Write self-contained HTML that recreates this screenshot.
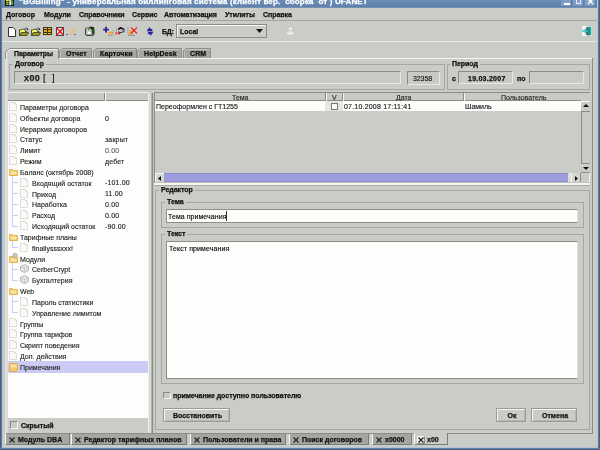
<!DOCTYPE html><html><head><meta charset="utf-8"><style>
html,body{margin:0;padding:0;width:600px;height:450px;overflow:hidden;background:#caccc8;font-family:"Liberation Sans", sans-serif;}
div,span{position:absolute;box-sizing:border-box;}
.t{white-space:nowrap;line-height:1;will-change:transform;-webkit-text-stroke:0.12px currentColor;}
span[style*="font-weight:bold"]{-webkit-text-stroke:0.25px currentColor;}
</style></head><body>
<div style="left:0px;top:0px;width:600px;height:8px;background:linear-gradient(#6a8eb8,#5b7faa)"></div>
<div style="left:0px;top:7px;width:600px;height:1px;background:#7890b0"></div>
<div style="left:0px;top:0px;width:1px;height:450px;background:#4c5c7a"></div>
<div style="left:1px;top:0px;width:1px;height:450px;background:#5a80a8"></div>
<div style="left:2px;top:8px;width:1px;height:440px;background:#b8c4d0"></div>
<div style="left:5px;top:58px;width:3px;height:376px;background:#dcdedc"></div>
<div style="left:598px;top:0px;width:1px;height:450px;background:#5a80a8"></div>
<div style="left:599px;top:0px;width:1px;height:450px;background:#4c5c7a"></div>
<div style="left:597px;top:0px;width:1px;height:450px;background:#b8c4d4"></div>
<div style="left:0px;top:448px;width:600px;height:1px;background:#5a80a8"></div>
<div style="left:0px;top:449px;width:600px;height:1px;background:#4c5c7a"></div>
<div style="left:2px;top:447px;width:596px;height:1px;background:#b8c4d0"></div>
<svg style="position:absolute;left:5px;top:0px" width="9" height="6" viewBox="0 0 9 6"><rect x="0" y="0" width="9" height="6" fill="#1a1a10"/><ellipse cx="2.4" cy="0.4" rx="1.5" ry="0.9" fill="#f0f020"/><ellipse cx="2.4" cy="2.5" rx="1.5" ry="0.7" fill="#b8b820"/><ellipse cx="2.4" cy="4.2" rx="1.5" ry="0.7" fill="#c8c820"/><rect x="4.2" y="0" width="1.8" height="5.2" fill="#e8e8e8"/><rect x="4.2" y="1.5" width="1.8" height="0.6" fill="#a0a0a0"/><rect x="6.2" y="0" width="1.6" height="5.2" fill="#18a018"/><rect x="6.2" y="1.6" width="1.6" height="0.8" fill="#b0e0b0"/><rect x="6.2" y="3.4" width="1.6" height="0.8" fill="#b0e0b0"/></svg>
<span class="t" style="left:19px;top:-2.5px;font-size:8px;font-weight:bold;color:#fff;letter-spacing:0.16px;">"BGBilling" - универсальная биллинговая система (клиент вер.&nbsp; сборка&nbsp; от ) UFANET</span>
<div style="left:561px;top:0px;width:11px;height:7px;background:#7f9ec6;border-right:1px solid #5a7eab;border-bottom:1px solid #5a7eab"></div>
<div style="left:573px;top:0px;width:11px;height:7px;background:#7f9ec6;border-right:1px solid #5a7eab;border-bottom:1px solid #5a7eab"></div>
<div style="left:585px;top:0px;width:11px;height:7px;background:#7f9ec6;border-right:1px solid #5a7eab;border-bottom:1px solid #5a7eab"></div>
<div style="left:564px;top:3px;width:6px;height:2px;background:#fff"></div>
<div style="left:576px;top:0px;width:5px;height:4px;border:1px solid #eef;border-top:0"></div>
<svg style="position:absolute;left:587px;top:0px" width="7" height="5" viewBox="0 0 7 5"><path d="M1 -1 L6 4 M6 -1 L1 4" stroke="#fff" stroke-width="1.4"/></svg>
<div style="left:2px;top:20px;width:595px;height:1px;background:#a4a49e"></div>
<span class="t" style="left:6px;top:10.7px;font-size:7px;font-weight:bold;color:#111;letter-spacing:-0.05px;">Договор</span>
<span class="t" style="left:44px;top:10.7px;font-size:7px;font-weight:bold;color:#111;letter-spacing:-0.05px;">Модули</span>
<span class="t" style="left:79px;top:10.7px;font-size:7px;font-weight:bold;color:#111;letter-spacing:-0.05px;">Справочники</span>
<span class="t" style="left:132px;top:10.7px;font-size:7px;font-weight:bold;color:#111;letter-spacing:-0.05px;">Сервис</span>
<span class="t" style="left:164px;top:10.7px;font-size:7px;font-weight:bold;color:#111;letter-spacing:-0.05px;">Автоматизация</span>
<span class="t" style="left:225px;top:10.7px;font-size:7px;font-weight:bold;color:#111;letter-spacing:-0.05px;">Утилиты</span>
<span class="t" style="left:263px;top:10.7px;font-size:7px;font-weight:bold;color:#111;letter-spacing:-0.05px;">Справка</span>
<div style="left:2px;top:41px;width:595px;height:1px;background:#e6e8e4"></div>
<svg style="position:absolute;left:8px;top:27px" width="8" height="10" viewBox="0 0 8 10"><path d="M0.5 0.5 H5 L7.5 3 V9.5 H0.5 Z" fill="#fff" stroke="#333"/></svg>
<svg style="position:absolute;left:19px;top:27px" width="10" height="9" viewBox="0 0 10 9"><path d="M0.5 8.5 V2.8 H3 L3.8 2.2 H6.2 V4.5 H8 V6 L2.2 6 Z" fill="#f8f870" stroke="#333" stroke-width="0.8"/><path d="M0.5 8.5 L2.2 5.6 H9.6 L8 8.5 Z" fill="#a0a010" stroke="#333" stroke-width="0.8"/><path d="M5.5 1.8 Q6.8 0.2 8.5 1.5" stroke="#444" fill="none" stroke-width="0.7"/><rect x="7.8" y="1.6" width="1.4" height="1.4" fill="#111"/></svg>
<svg style="position:absolute;left:31px;top:27px" width="10" height="9" viewBox="0 0 10 9"><path d="M0.5 8.5 V2.8 H3 L3.8 2.2 H6.2 V4.5 H8 V6 L2.2 6 Z" fill="#f8f870" stroke="#333" stroke-width="0.8"/><path d="M0.5 8.5 L2.2 5.6 H9.6 L8 8.5 Z" fill="#a0a010" stroke="#333" stroke-width="0.8"/><path d="M5.5 1.8 Q6.8 0.2 8.5 1.5" stroke="#444" fill="none" stroke-width="0.7"/><rect x="7.8" y="1.6" width="1.4" height="1.4" fill="#111"/></svg>
<svg style="position:absolute;left:43px;top:27px" width="9" height="8" viewBox="0 0 9 8"><rect x="0" y="0" width="9" height="8" fill="#3a3020"/><rect x="1" y="1" width="3" height="1" fill="#f8c000"/><rect x="5" y="1" width="3" height="1" fill="#f8c000"/><rect x="1" y="3" width="3" height="2" fill="#e8a800"/><rect x="5" y="3" width="3" height="2" fill="#e8a800"/><rect x="1" y="6" width="3" height="1" fill="#f8c000"/><rect x="5" y="6" width="3" height="1" fill="#f8c000"/></svg>
<svg style="position:absolute;left:56px;top:27px" width="8" height="9" viewBox="0 0 8 9"><rect x="0.5" y="0.5" width="7" height="8" fill="#d8d8d8" stroke="#444"/><rect x="1.5" y="1.5" width="2" height="6" fill="#f4f4f4"/><path d="M0.5 1 L7.5 8 M7.5 0.5 L0.5 8.5" stroke="#f01818" stroke-width="1.2"/><rect x="2.8" y="3.3" width="2.4" height="2.4" fill="#f01818"/></svg>
<svg style="position:absolute;left:66px;top:28px" width="11" height="8" viewBox="0 0 11 8"><path d="M4 7 L5 3 L8 0.5 L10 2 L7 5 Z" fill="#e8c890" stroke="#d8b070" stroke-width="0.6"/><rect x="0" y="6" width="2" height="1" fill="#5070a0"/><rect x="8" y="6" width="2" height="1" fill="#5070a0"/></svg>
<svg style="position:absolute;left:85px;top:26px" width="10" height="10" viewBox="0 0 10 10"><rect x="0.6" y="2" width="8" height="7.4" rx="1.5" fill="#cfcfcf" stroke="#3a3a3a" stroke-width="1.1"/><path d="M4 0.8 H7.5 Q9.4 0.8 9.4 2.7 V8.2 H6.8 V4 Z" fill="#102810"/><path d="M8 2.2 V8" stroke="#2a8a2a" stroke-width="0.9"/><circle cx="2.2" cy="2.2" r="0.9" fill="#a8a820"/><circle cx="3.8" cy="3.6" r="0.7" fill="#404018"/><circle cx="5.4" cy="5" r="0.8" fill="#a0c060"/><rect x="3" y="6" width="2.5" height="1.6" fill="#fff"/></svg>
<svg style="position:absolute;left:103px;top:26px" width="11" height="10" viewBox="0 0 11 10"><path d="M3 0.8 V6.5 M0.2 3.6 H5.8" stroke="#302090" stroke-width="1.8"/><rect x="5.5" y="5.8" width="4" height="2.2" fill="#f4a830"/><path d="M10 4.5 V9 M5 9.5 H10" stroke="#555" stroke-width="0.7" stroke-dasharray="0.8 0.8"/></svg>
<svg style="position:absolute;left:115px;top:26px" width="10" height="10" viewBox="0 0 10 10"><rect x="7.5" y="2" width="2" height="4.5" fill="#4848a8"/><path d="M3 3 Q4 0.5 6.5 1 L8 2.5 L7.5 4 H3 Z" fill="#111"/><ellipse cx="5.8" cy="4.2" rx="1.6" ry="1.3" fill="#e8c090"/><path d="M3.5 5 Q5 7 7 5.5 V7 H3.5 Z" fill="#222"/><circle cx="1.5" cy="7.3" r="1.1" fill="#e82020"/><circle cx="4.2" cy="7.5" r="1.1" fill="#e82020"/><path d="M1.5 2.5 V6" stroke="#555" stroke-width="0.7" stroke-dasharray="0.8 0.8"/></svg>
<svg style="position:absolute;left:127px;top:26px" width="11" height="10" viewBox="0 0 11 10"><path d="M1.5 8.5 L3.5 3.5 L5.5 5 L6 8.5 Z" fill="#f0a828"/><path d="M4 1.5 L10 7.5 M10 1.5 L4 7.5" stroke="#f02828" stroke-width="1.1"/><circle cx="6.8" cy="4.3" r="1" fill="#e02020"/><path d="M1 1 V7" stroke="#555" stroke-width="0.7" stroke-dasharray="0.8 0.8"/><path d="M1 9.3 H8" stroke="#444" stroke-width="0.8" stroke-dasharray="0.8 0.8"/></svg>
<svg style="position:absolute;left:146px;top:26px" width="9" height="11" viewBox="0 0 9 11"><path d="M1 4.6 L3.6 1 L4.2 2.4 L6.8 3.4 L5.8 5 L1.4 5.6 Z" fill="#3020a0"/><path d="M7.2 6.2 L4.6 10 L4 8.6 L1.4 7.6 L2.4 6 L6.8 5.4 Z" fill="#3020a0"/></svg>
<span class="t" style="left:162.3px;top:27.8px;font-size:7px;font-weight:bold;color:#111;letter-spacing:-0.2px;">БД:</span>
<div style="left:176px;top:24px;width:91px;height:14px;border:1px solid #8a8c88;background:#caccc8;box-shadow:inset 1px 1px 0 #f6f6f0"></div>
<span class="t" style="left:179.5px;top:27.5px;font-size:7px;font-weight:bold;color:#111;letter-spacing:0px;">Local</span>
<svg style="position:absolute;left:256px;top:29px" width="7" height="4" viewBox="0 0 7 4"><path d="M0 0 H7 L3.5 4 Z" fill="#111"/></svg>
<svg style="position:absolute;left:286px;top:26px" width="9" height="10" viewBox="0 0 9 10"><circle cx="4.5" cy="3" r="2.5" fill="#e6e6e2" stroke="#b8b8b4" stroke-width="0.6"/><rect x="0.5" y="5" width="8" height="4.5" rx="2" fill="#e6e6e2" stroke="#b8b8b4" stroke-width="0.6"/></svg>
<svg style="position:absolute;left:582px;top:26px" width="10" height="10" viewBox="0 0 10 10"><rect x="0" y="0" width="9.5" height="10" fill="#f2f2f0"/><path d="M4 1.5 L7 0.5 V9.5 L4 9 Z" fill="#5a6464"/><path d="M6 1.2 L9.2 0.3 V9 L6.6 10 Z" fill="#18b4b4"/><path d="M7.2 2 V8.5" stroke="#0c6a6a" stroke-width="0.6"/><rect x="0.3" y="4.2" width="2.8" height="1.6" fill="#30c8c8"/><path d="M2.6 2.2 L6 5 L2.6 7.8 Z" fill="#20d0d0"/></svg>
<svg style="position:absolute;left:5px;top:47px" width="55" height="12" viewBox="0 0 55 12"><path d="M0.5 12 V5 L4.5 1.5 H53.5 V12" fill="#caccc8" stroke="#8c8c88" stroke-width="1"/><path d="M1.5 12 V5.5 L5 2.5 H52.5" fill="none" stroke="#f6f6f0" stroke-width="1"/></svg>
<span class="t" style="left:14px;top:50px;font-size:7px;font-weight:bold;color:#111;letter-spacing:-0.1px;">Параметры</span>
<svg style="position:absolute;left:59px;top:47px" width="34" height="11" viewBox="0 0 34 11"><path d="M0.5 11 V4 L3 1.5 H32.5 V11" fill="#a4a6a2" stroke="#8c8c88" stroke-width="1"/><path d="M1.5 10.5 V4.5 L3.5 2.5 H31.5" fill="none" stroke="#c4c4c0" stroke-width="1"/></svg>
<span class="t" style="left:65.5px;top:50px;font-size:7px;font-weight:bold;color:#111;letter-spacing:0.1px;">Отчет</span>
<svg style="position:absolute;left:93px;top:47px" width="45" height="11" viewBox="0 0 45 11"><path d="M0.5 11 V4 L3 1.5 H43.5 V11" fill="#a4a6a2" stroke="#8c8c88" stroke-width="1"/><path d="M1.5 10.5 V4.5 L3.5 2.5 H42.5" fill="none" stroke="#c4c4c0" stroke-width="1"/></svg>
<span class="t" style="left:99.5px;top:50px;font-size:7px;font-weight:bold;color:#111;letter-spacing:0.1px;">Карточки</span>
<svg style="position:absolute;left:137px;top:47px" width="46" height="11" viewBox="0 0 46 11"><path d="M0.5 11 V4 L3 1.5 H44.5 V11" fill="#a4a6a2" stroke="#8c8c88" stroke-width="1"/><path d="M1.5 10.5 V4.5 L3.5 2.5 H43.5" fill="none" stroke="#c4c4c0" stroke-width="1"/></svg>
<span class="t" style="left:143.5px;top:50px;font-size:7px;font-weight:bold;color:#111;letter-spacing:0.1px;">HelpDesk</span>
<svg style="position:absolute;left:183px;top:47px" width="29" height="11" viewBox="0 0 29 11"><path d="M0.5 11 V4 L3 1.5 H27.5 V11" fill="#a4a6a2" stroke="#8c8c88" stroke-width="1"/><path d="M1.5 10.5 V4.5 L3.5 2.5 H26.5" fill="none" stroke="#c4c4c0" stroke-width="1"/></svg>
<span class="t" style="left:189.5px;top:50px;font-size:7px;font-weight:bold;color:#111;letter-spacing:0.1px;">CRM</span>
<div style="left:6px;top:58px;width:587px;height:376px;border-right:1px solid #8c8c88;border-bottom:1px solid #8c8c88"></div>
<div style="left:59px;top:58px;width:533px;height:1px;background:#f6f6f0"></div>
<div style="left:9px;top:64px;width:436px;height:26px;border:1px solid #a6a6a2"></div>
<span class="t" style="left:13px;top:60px;font-size:7px;font-weight:bold;color:#111;letter-spacing:-0.05px;background:#caccc8;padding:0 2px">Договор</span>
<div style="left:14px;top:71px;width:387px;height:13px;background:#c8cac6;border:1px solid #8c8c88;border-right-color:#e6e8e4;border-bottom-color:#e6e8e4"></div>
<span class="t" style="left:24px;top:73.6px;font-size:9px;font-weight:bold;color:#222;letter-spacing:0.4px;font-family:"Liberation Mono",monospace;-webkit-text-stroke:0">x00</span>
<span class="t" style="left:42.6px;top:73.3px;font-size:9.5px;font-weight:normal;color:#111;letter-spacing:0px;-webkit-text-stroke:0.15px #111">[</span>
<span class="t" style="left:52.1px;top:73.3px;font-size:9.5px;font-weight:normal;color:#111;letter-spacing:0px;-webkit-text-stroke:0.15px #111">]</span>
<div style="left:407px;top:71px;width:33px;height:14px;background:#c8cac6;border:1px solid #8c8c88;border-right-color:#e6e8e4;border-bottom-color:#e6e8e4"></div>
<span class="t" style="left:412.5px;top:74.5px;font-size:7px;font-weight:normal;color:#111;letter-spacing:-0.1px;font-family:"Liberation Mono",monospace;-webkit-text-stroke:0.2px #111">32358</span>
<div style="left:447px;top:64px;width:143px;height:26px;border:1px solid #a6a6a2"></div>
<span class="t" style="left:450px;top:60px;font-size:7px;font-weight:bold;color:#111;letter-spacing:-0.05px;background:#caccc8;padding:0 2px">Период</span>
<span class="t" style="left:452px;top:75px;font-size:7px;font-weight:bold;color:#111;letter-spacing:0px;">с</span>
<div style="left:458px;top:71px;width:55px;height:13px;background:#c8cac6;border:1px solid #8c8c88;border-right-color:#e6e8e4;border-bottom-color:#e6e8e4"></div>
<span class="t" style="left:468px;top:74.5px;font-size:7px;font-weight:bold;color:#111;letter-spacing:0.25px;">19.03.2007</span>
<span class="t" style="left:517px;top:75px;font-size:7px;font-weight:bold;color:#111;letter-spacing:0px;">по</span>
<div style="left:529px;top:71px;width:55px;height:13px;background:#c8cac6;border:1px solid #8c8c88;border-right-color:#e6e8e4;border-bottom-color:#e6e8e4"></div>
<div style="left:148px;top:93px;width:1px;height:340px;background:#f0f0ea"></div>
<div style="left:8px;top:92px;width:140px;height:1px;background:#ececE6"></div>
<div style="left:8px;top:93px;width:140px;height:8px;background:#c8cac6;border-bottom:1px solid #8c8c88"></div>
<div style="left:104px;top:93px;width:1px;height:8px;background:#8c8c88"></div>
<div style="left:105px;top:93px;width:1px;height:8px;background:#f6f6f0"></div>
<div style="left:8px;top:101px;width:140px;height:317px;background:#fdfdfb"></div>
<div style="left:12px;top:176px;width:1px;height:51px;background:#ccccfa"></div>
<div style="left:12px;top:182px;width:6px;height:1px;background:#ccccfa"></div>
<div style="left:12px;top:193px;width:6px;height:1px;background:#ccccfa"></div>
<div style="left:12px;top:204px;width:6px;height:1px;background:#ccccfa"></div>
<div style="left:12px;top:215px;width:6px;height:1px;background:#ccccfa"></div>
<div style="left:12px;top:226px;width:6px;height:1px;background:#ccccfa"></div>
<div style="left:12px;top:241px;width:1px;height:7px;background:#ccccfa"></div>
<div style="left:12px;top:247px;width:6px;height:1px;background:#ccccfa"></div>
<div style="left:12px;top:263px;width:1px;height:18px;background:#ccccfa"></div>
<div style="left:12px;top:269px;width:6px;height:1px;background:#ccccfa"></div>
<div style="left:12px;top:280px;width:6px;height:1px;background:#ccccfa"></div>
<div style="left:12px;top:295px;width:1px;height:18px;background:#ccccfa"></div>
<div style="left:12px;top:301px;width:6px;height:1px;background:#ccccfa"></div>
<div style="left:12px;top:312px;width:6px;height:1px;background:#ccccfa"></div>
<svg style="position:absolute;left:9px;top:102px" width="8" height="9" viewBox="0 0 8 9"><path d="M0.5 0.5 H5 L7.5 3 V8.5 H0.5 Z" fill="#fafaf8" stroke="#dcdcd8"/><path d="M5 0.5 L7.5 3" stroke="#c8c8c4"/></svg>
<span class="t" style="left:20px;top:104.0px;font-size:7px;font-weight:normal;color:#222;letter-spacing:0px;">Параметры договора</span>
<svg style="position:absolute;left:9px;top:113px" width="8" height="9" viewBox="0 0 8 9"><path d="M0.5 0.5 H5 L7.5 3 V8.5 H0.5 Z" fill="#fafaf8" stroke="#dcdcd8"/><path d="M5 0.5 L7.5 3" stroke="#c8c8c4"/></svg>
<span class="t" style="left:20px;top:114.825px;font-size:7px;font-weight:normal;color:#222;letter-spacing:0px;">Объекты договора</span>
<span class="t" style="left:105.3px;top:114.525px;font-size:7px;font-weight:normal;color:#222;letter-spacing:0.15px;">0</span>
<svg style="position:absolute;left:9px;top:124px" width="8" height="9" viewBox="0 0 8 9"><path d="M0.5 0.5 H5 L7.5 3 V8.5 H0.5 Z" fill="#fafaf8" stroke="#dcdcd8"/><path d="M5 0.5 L7.5 3" stroke="#c8c8c4"/></svg>
<span class="t" style="left:20px;top:125.65px;font-size:7px;font-weight:normal;color:#222;letter-spacing:0px;">Иерархия договоров</span>
<svg style="position:absolute;left:9px;top:134px" width="8" height="9" viewBox="0 0 8 9"><path d="M0.5 0.5 H5 L7.5 3 V8.5 H0.5 Z" fill="#fafaf8" stroke="#dcdcd8"/><path d="M5 0.5 L7.5 3" stroke="#c8c8c4"/></svg>
<span class="t" style="left:20px;top:136.475px;font-size:7px;font-weight:normal;color:#222;letter-spacing:0px;">Статус</span>
<span class="t" style="left:105.3px;top:136.17499999999998px;font-size:7px;font-weight:normal;color:#222;letter-spacing:0.15px;">закрыт</span>
<svg style="position:absolute;left:9px;top:145px" width="8" height="9" viewBox="0 0 8 9"><path d="M0.5 0.5 H5 L7.5 3 V8.5 H0.5 Z" fill="#fafaf8" stroke="#dcdcd8"/><path d="M5 0.5 L7.5 3" stroke="#c8c8c4"/></svg>
<span class="t" style="left:20px;top:147.3px;font-size:7px;font-weight:normal;color:#222;letter-spacing:0px;">Лимит</span>
<span class="t" style="left:105.3px;top:147.0px;font-size:7px;font-weight:normal;color:#5c5c5c;letter-spacing:0.15px;">0.00</span>
<svg style="position:absolute;left:9px;top:156px" width="8" height="9" viewBox="0 0 8 9"><path d="M0.5 0.5 H5 L7.5 3 V8.5 H0.5 Z" fill="#fafaf8" stroke="#dcdcd8"/><path d="M5 0.5 L7.5 3" stroke="#c8c8c4"/></svg>
<span class="t" style="left:20px;top:158.125px;font-size:7px;font-weight:normal;color:#222;letter-spacing:0px;">Режим</span>
<span class="t" style="left:105.3px;top:157.825px;font-size:7px;font-weight:normal;color:#222;letter-spacing:0.15px;">дебет</span>
<svg style="position:absolute;left:9px;top:168px" width="9" height="8" viewBox="0 0 9 8"><path d="M0.5 1.5 H3.5 L4.5 2.5 H8.5 V7.5 H0.5 Z" fill="#f2c868" stroke="#e0a840" stroke-width="0.8"/><rect x="1.5" y="3.5" width="6" height="3" fill="#fce4a0"/></svg>
<span class="t" style="left:20px;top:168.95px;font-size:7px;font-weight:normal;color:#222;letter-spacing:0px;">Баланс (октябрь 2008)</span>
<svg style="position:absolute;left:20px;top:178px" width="8" height="9" viewBox="0 0 8 9"><path d="M0.5 0.5 H5 L7.5 3 V8.5 H0.5 Z" fill="#fafaf8" stroke="#dcdcd8"/><path d="M5 0.5 L7.5 3" stroke="#c8c8c4"/></svg>
<span class="t" style="left:32px;top:179.77499999999998px;font-size:7px;font-weight:normal;color:#222;letter-spacing:0px;">Входящий остаток</span>
<span class="t" style="left:105.3px;top:179.47499999999997px;font-size:7px;font-weight:normal;color:#222;letter-spacing:0.15px;">-101.00</span>
<svg style="position:absolute;left:20px;top:189px" width="8" height="9" viewBox="0 0 8 9"><path d="M0.5 0.5 H5 L7.5 3 V8.5 H0.5 Z" fill="#fafaf8" stroke="#dcdcd8"/><path d="M5 0.5 L7.5 3" stroke="#c8c8c4"/></svg>
<span class="t" style="left:32px;top:190.6px;font-size:7px;font-weight:normal;color:#222;letter-spacing:0px;">Приход</span>
<span class="t" style="left:105.3px;top:190.29999999999998px;font-size:7px;font-weight:normal;color:#222;letter-spacing:0.15px;">11.00</span>
<svg style="position:absolute;left:20px;top:199px" width="8" height="9" viewBox="0 0 8 9"><path d="M0.5 0.5 H5 L7.5 3 V8.5 H0.5 Z" fill="#fafaf8" stroke="#dcdcd8"/><path d="M5 0.5 L7.5 3" stroke="#c8c8c4"/></svg>
<span class="t" style="left:32px;top:201.425px;font-size:7px;font-weight:normal;color:#222;letter-spacing:0px;">Наработка</span>
<span class="t" style="left:105.3px;top:201.125px;font-size:7px;font-weight:normal;color:#222;letter-spacing:0.15px;">0.00</span>
<svg style="position:absolute;left:20px;top:210px" width="8" height="9" viewBox="0 0 8 9"><path d="M0.5 0.5 H5 L7.5 3 V8.5 H0.5 Z" fill="#fafaf8" stroke="#dcdcd8"/><path d="M5 0.5 L7.5 3" stroke="#c8c8c4"/></svg>
<span class="t" style="left:32px;top:212.25px;font-size:7px;font-weight:normal;color:#222;letter-spacing:0px;">Расход</span>
<span class="t" style="left:105.3px;top:211.95px;font-size:7px;font-weight:normal;color:#222;letter-spacing:0.15px;">0.00</span>
<svg style="position:absolute;left:20px;top:221px" width="8" height="9" viewBox="0 0 8 9"><path d="M0.5 0.5 H5 L7.5 3 V8.5 H0.5 Z" fill="#fafaf8" stroke="#dcdcd8"/><path d="M5 0.5 L7.5 3" stroke="#c8c8c4"/></svg>
<span class="t" style="left:32px;top:223.075px;font-size:7px;font-weight:normal;color:#222;letter-spacing:0px;">Исходящий остаток</span>
<span class="t" style="left:105.3px;top:222.77499999999998px;font-size:7px;font-weight:normal;color:#222;letter-spacing:0.15px;">-90.00</span>
<svg style="position:absolute;left:9px;top:233px" width="9" height="8" viewBox="0 0 9 8"><path d="M0.5 1.5 H3.5 L4.5 2.5 H8.5 V7.5 H0.5 Z" fill="#f2c868" stroke="#e0a840" stroke-width="0.8"/><rect x="1.5" y="3.5" width="6" height="3" fill="#fce4a0"/></svg>
<span class="t" style="left:20px;top:233.89999999999998px;font-size:7px;font-weight:normal;color:#222;letter-spacing:0px;">Тарифные планы</span>
<svg style="position:absolute;left:20px;top:243px" width="8" height="9" viewBox="0 0 8 9"><path d="M0.5 0.5 H5 L7.5 3 V8.5 H0.5 Z" fill="#fafaf8" stroke="#dcdcd8"/><path d="M5 0.5 L7.5 3" stroke="#c8c8c4"/></svg>
<span class="t" style="left:32px;top:244.725px;font-size:7px;font-weight:normal;color:#222;letter-spacing:0px;">finallysssxxx!</span>
<svg style="position:absolute;left:9px;top:255px" width="9" height="8" viewBox="0 0 9 8"><path d="M0.5 1.5 H3.5 L4.5 2.5 H8.5 V7.5 H0.5 Z" fill="#f2c868" stroke="#e0a840" stroke-width="0.8"/><rect x="1.5" y="3.5" width="6" height="3" fill="#fce4a0"/></svg>
<svg style="position:absolute;left:12px;top:253px" width="6" height="5" viewBox="0 0 6 5"><circle cx="3" cy="2.5" r="2.2" fill="#c8c8c8" stroke="#999" stroke-width="0.6"/></svg>
<span class="t" style="left:20px;top:255.54999999999998px;font-size:7px;font-weight:normal;color:#222;letter-spacing:0px;">Модули</span>
<svg style="position:absolute;left:20px;top:264px" width="9" height="9" viewBox="0 0 9 9"><path d="M4.5 0.5 L8.5 2.5 V6.5 L4.5 8.5 L0.5 6.5 V2.5 Z" fill="#e4e4e4" stroke="#a8a8a8" stroke-width="0.8"/><path d="M0.5 2.5 L4.5 4.5 L8.5 2.5 M4.5 4.5 V8.5" stroke="#b8b8b8" stroke-width="0.6" fill="none"/></svg>
<span class="t" style="left:32px;top:266.375px;font-size:7px;font-weight:normal;color:#222;letter-spacing:0px;">CerberCrypt</span>
<svg style="position:absolute;left:20px;top:275px" width="9" height="9" viewBox="0 0 9 9"><path d="M4.5 0.5 L8.5 2.5 V6.5 L4.5 8.5 L0.5 6.5 V2.5 Z" fill="#e4e4e4" stroke="#a8a8a8" stroke-width="0.8"/><path d="M0.5 2.5 L4.5 4.5 L8.5 2.5 M4.5 4.5 V8.5" stroke="#b8b8b8" stroke-width="0.6" fill="none"/></svg>
<span class="t" style="left:32px;top:277.2px;font-size:7px;font-weight:normal;color:#222;letter-spacing:0px;">Бухгалтерия</span>
<svg style="position:absolute;left:9px;top:287px" width="9" height="8" viewBox="0 0 9 8"><path d="M0.5 1.5 H3.5 L4.5 2.5 H8.5 V7.5 H0.5 Z" fill="#f2c868" stroke="#e0a840" stroke-width="0.8"/><rect x="1.5" y="3.5" width="6" height="3" fill="#fce4a0"/></svg>
<span class="t" style="left:20px;top:288.025px;font-size:7px;font-weight:normal;color:#222;letter-spacing:0px;">Web</span>
<svg style="position:absolute;left:20px;top:297px" width="8" height="9" viewBox="0 0 8 9"><path d="M0.5 0.5 H5 L7.5 3 V8.5 H0.5 Z" fill="#fafaf8" stroke="#dcdcd8"/><path d="M5 0.5 L7.5 3" stroke="#c8c8c4"/></svg>
<span class="t" style="left:32px;top:298.85px;font-size:7px;font-weight:normal;color:#222;letter-spacing:0px;">Пароль статистики</span>
<svg style="position:absolute;left:20px;top:308px" width="8" height="9" viewBox="0 0 8 9"><path d="M0.5 0.5 H5 L7.5 3 V8.5 H0.5 Z" fill="#fafaf8" stroke="#dcdcd8"/><path d="M5 0.5 L7.5 3" stroke="#c8c8c4"/></svg>
<span class="t" style="left:32px;top:309.67499999999995px;font-size:7px;font-weight:normal;color:#222;letter-spacing:0px;">Управление лимитом</span>
<svg style="position:absolute;left:9px;top:318px" width="8" height="9" viewBox="0 0 8 9"><path d="M0.5 0.5 H5 L7.5 3 V8.5 H0.5 Z" fill="#fafaf8" stroke="#dcdcd8"/><path d="M5 0.5 L7.5 3" stroke="#c8c8c4"/></svg>
<span class="t" style="left:20px;top:320.5px;font-size:7px;font-weight:normal;color:#222;letter-spacing:0px;">Группы</span>
<svg style="position:absolute;left:9px;top:329px" width="8" height="9" viewBox="0 0 8 9"><path d="M0.5 0.5 H5 L7.5 3 V8.5 H0.5 Z" fill="#fafaf8" stroke="#dcdcd8"/><path d="M5 0.5 L7.5 3" stroke="#c8c8c4"/></svg>
<span class="t" style="left:20px;top:331.325px;font-size:7px;font-weight:normal;color:#222;letter-spacing:0px;">Группа тарифов</span>
<svg style="position:absolute;left:9px;top:340px" width="8" height="9" viewBox="0 0 8 9"><path d="M0.5 0.5 H5 L7.5 3 V8.5 H0.5 Z" fill="#fafaf8" stroke="#dcdcd8"/><path d="M5 0.5 L7.5 3" stroke="#c8c8c4"/></svg>
<span class="t" style="left:20px;top:342.15px;font-size:7px;font-weight:normal;color:#222;letter-spacing:0px;">Скрипт поведения</span>
<svg style="position:absolute;left:9px;top:351px" width="8" height="9" viewBox="0 0 8 9"><path d="M0.5 0.5 H5 L7.5 3 V8.5 H0.5 Z" fill="#fafaf8" stroke="#dcdcd8"/><path d="M5 0.5 L7.5 3" stroke="#c8c8c4"/></svg>
<span class="t" style="left:20px;top:352.975px;font-size:7px;font-weight:normal;color:#222;letter-spacing:0px;">Доп. действия</span>
<div style="left:8px;top:361px;width:140px;height:11.5px;background:#cbcbf6"></div>
<svg style="position:absolute;left:9px;top:363px" width="9" height="9" viewBox="0 0 9 9"><rect x="0.5" y="0.5" width="8" height="8" rx="1" fill="#f4c870" stroke="#e0a040" stroke-width="0.8"/><rect x="1.5" y="1.5" width="6" height="3" fill="#fce0a0"/></svg>
<span class="t" style="left:20px;top:363.79999999999995px;font-size:7px;font-weight:normal;color:#222;letter-spacing:0px;">Примечания</span>
<div style="left:10px;top:421px;width:8px;height:8px;background:#c8cac6;border:1px solid #8c8c88;border-right-color:#f6f6f0;border-bottom-color:#f6f6f0"></div>
<span class="t" style="left:21px;top:422px;font-size:7px;font-weight:bold;color:#111;letter-spacing:0px;">Скрытый</span>
<div style="left:149px;top:93px;width:2px;height:340px;background:#d8dad6"></div>
<div style="left:151px;top:93px;width:1px;height:340px;background:#b0b2ae"></div>
<div style="left:152px;top:93px;width:1px;height:340px;background:#8c8e8a"></div>
<div style="left:153px;top:93px;width:1px;height:340px;background:#c0c2be"></div>
<div style="left:154px;top:92px;width:436px;height:92px;border:1px solid #8c8c88;border-right-color:#f6f6f0;border-bottom-color:#f6f6f0"></div>
<div style="left:155px;top:93px;width:426px;height:8px;background:#c8cac6;border-bottom:1px solid #8c8c88"></div>
<div style="left:325px;top:93px;width:1px;height:8px;background:#8c8c88"></div>
<div style="left:326px;top:93px;width:1px;height:8px;background:#f6f6f0"></div>
<div style="left:342px;top:93px;width:1px;height:8px;background:#8c8c88"></div>
<div style="left:343px;top:93px;width:1px;height:8px;background:#f6f6f0"></div>
<div style="left:463px;top:93px;width:1px;height:8px;background:#8c8c88"></div>
<div style="left:464px;top:93px;width:1px;height:8px;background:#f6f6f0"></div>
<span class="t" style="left:231.7px;top:94px;font-size:7px;font-weight:normal;color:#222;letter-spacing:0px;">Тема</span>
<span class="t" style="left:332px;top:94px;font-size:7px;font-weight:normal;color:#222;letter-spacing:0px;">V</span>
<span class="t" style="left:396px;top:94px;font-size:7px;font-weight:normal;color:#222;letter-spacing:0px;">Дата</span>
<span class="t" style="left:501px;top:94px;font-size:7px;font-weight:normal;color:#222;letter-spacing:0px;">Пользователь</span>
<div style="left:155px;top:101px;width:426px;height:10px;background:#fdfdfb"></div>
<div style="left:325px;top:101px;width:18px;height:10px;background:#e6e6e2"></div>
<div style="left:331px;top:103px;width:7px;height:7px;background:#fdfdfb;border:1px solid #777"></div>
<span class="t" style="left:155.5px;top:103px;font-size:7px;font-weight:normal;color:#111;letter-spacing:0px;">Переоформлен с ГТ1255</span>
<span class="t" style="left:344px;top:103px;font-size:7px;font-weight:normal;color:#111;letter-spacing:0.2px;">07.10.2008 17:11:41</span>
<span class="t" style="left:465px;top:103px;font-size:7px;font-weight:normal;color:#111;letter-spacing:0px;">Шамиль</span>
<div style="left:581px;top:92px;width:9px;height:1px;background:#8c8c88"></div>
<div style="left:581px;top:93px;width:9px;height:8px;background:#caccc8"></div>
<div style="left:581px;top:101px;width:9px;height:72px;background:#c8cac6"></div>
<div style="left:581px;top:101px;width:9px;height:10px;background:#caccc8;border-top:1px solid #f6f6f0"></div>
<svg style="position:absolute;left:583px;top:104px" width="6" height="3" viewBox="0 0 6 3"><path d="M0 3 H6 L3 0 Z" fill="#111"/></svg>
<div style="left:581px;top:111px;width:9px;height:1px;background:#8c8c88"></div>
<div style="left:581px;top:111px;width:1px;height:52px;background:#8c8c88"></div>
<div style="left:581px;top:163px;width:9px;height:1px;background:#8c8c88"></div>
<div style="left:581px;top:164px;width:9px;height:8px;background:#caccc8"></div>
<svg style="position:absolute;left:583px;top:167px" width="6" height="3" viewBox="0 0 6 3"><path d="M0 0 H6 L3 3 Z" fill="#111"/></svg>
<div style="left:581px;top:172px;width:9px;height:1px;background:#8c8c88"></div>
<div style="left:155px;top:173px;width:426px;height:10px;background:#c8cac6"></div>
<div style="left:155px;top:173px;width:9px;height:9px;background:#d4d6d2;border-left:1px solid #f6f6f0;border-top:1px solid #f6f6f0"></div>
<svg style="position:absolute;left:158px;top:176px" width="3" height="5" viewBox="0 0 3 5"><path d="M3 0 V5 L0 2.5 Z" fill="#111"/></svg>
<div style="left:164px;top:173px;width:404px;height:9px;background:#9c9cdc;background-image:repeating-conic-gradient(#a6a6e2 0 25%,#9494d6 0 50%);background-size:2px 2px;border-top:1px solid #8c8cd0;border-bottom:1px solid #9090d0"></div>
<div style="left:568px;top:173px;width:3px;height:9px;background:#dcdcd6"></div>
<div style="left:571px;top:173px;width:10px;height:9px;background:#d4d6d2;border-left:1px solid #f6f6f0"></div>
<svg style="position:absolute;left:575px;top:176px" width="3" height="5" viewBox="0 0 3 5"><path d="M0 0 V5 L3 2.5 Z" fill="#111"/></svg>
<div style="left:580px;top:173px;width:1px;height:9px;background:#8c8c88"></div>
<div style="left:155px;top:182px;width:435px;height:1px;background:#c0c2be"></div>
<div style="left:154px;top:183px;width:436px;height:2px;background:#f6f6f0"></div>
<div style="left:154px;top:185px;width:436px;height:1px;background:#a8aaa6"></div>
<div style="left:155px;top:190px;width:435px;height:240px;border:1px solid #a6a6a2"></div>
<span class="t" style="left:159px;top:186px;font-size:7px;font-weight:bold;color:#111;letter-spacing:-0.05px;background:#caccc8;padding:0 2px">Редактор</span>
<div style="left:161px;top:202px;width:423px;height:26px;border:1px solid #a6a6a2"></div>
<span class="t" style="left:165px;top:198px;font-size:7px;font-weight:bold;color:#111;letter-spacing:-0.05px;background:#caccc8;padding:0 2px">Тема</span>
<div style="left:166px;top:209px;width:412px;height:14px;background:#fdfdfb;border:1px solid #8c8c88;border-right-color:#e0e2de"></div>
<span class="t" style="left:168px;top:212.5px;font-size:7px;font-weight:normal;color:#000;letter-spacing:0.06px;">Тема примечания</span>
<div style="left:226px;top:211px;width:1px;height:10px;background:#333"></div>
<div style="left:161px;top:234px;width:423px;height:150px;border:1px solid #a6a6a2"></div>
<span class="t" style="left:165px;top:230px;font-size:7px;font-weight:bold;color:#111;letter-spacing:-0.05px;background:#caccc8;padding:0 2px">Текст</span>
<div style="left:166px;top:241px;width:412px;height:138px;background:#fdfdfb;border:1px solid #8c8c88;border-right-color:#e0e2de"></div>
<span class="t" style="left:168.5px;top:244.5px;font-size:7px;font-weight:normal;color:#000;letter-spacing:0.1px;">Текст примечания</span>
<div style="left:162.5px;top:392px;width:8px;height:7px;background:#c8cac6;border:1px solid #8c8c88;border-right-color:#f6f6f0;border-bottom-color:#f6f6f0"></div>
<span class="t" style="left:172.5px;top:391.8px;font-size:7px;font-weight:bold;color:#111;letter-spacing:-0.03px;">примечание доступно пользователю</span>
<div style="left:163px;top:408px;width:67px;height:14px;background:#caccc8;border:1px solid #9a9c98;box-shadow:inset 1px 1px 0 #f6f6f0, inset -1px -1px 0 #b4b6b2"></div>
<span class="t" style="left:164px;top:411.5px;width:67px;text-align:center;font-size:7px;font-weight:bold;color:#111">Восстановить</span>
<div style="left:496px;top:408px;width:30px;height:14px;background:#caccc8;border:1px solid #9a9c98;box-shadow:inset 1px 1px 0 #f6f6f0, inset -1px -1px 0 #b4b6b2"></div>
<span class="t" style="left:497px;top:411.5px;width:30px;text-align:center;font-size:7px;font-weight:bold;color:#111">Ок</span>
<div style="left:531px;top:408px;width:46px;height:14px;background:#caccc8;border:1px solid #9a9c98;box-shadow:inset 1px 1px 0 #f6f6f0, inset -1px -1px 0 #b4b6b2"></div>
<span class="t" style="left:532px;top:411.5px;width:46px;text-align:center;font-size:7px;font-weight:bold;color:#111">Отмена</span>
<div style="left:5px;top:434px;width:65px;height:11px;background:#a4a6a2;border-left:1px solid #f6f6f0;border-right:1px solid #7c7c78;border-bottom:1px solid #7c7c78"></div>
<svg style="position:absolute;left:9px;top:436.5px" width="6" height="6" viewBox="0 0 6 6"><path d="M0.5 0.5 L5.5 5.5 M5.5 0.5 L0.5 5.5" stroke="#222" stroke-width="1.1"/></svg>
<span class="t" style="left:18px;top:435.5px;font-size:7px;font-weight:bold;color:#111;letter-spacing:0px;">Модуль DBA</span>
<div style="left:71px;top:434px;width:116px;height:11px;background:#a4a6a2;border-left:1px solid #f6f6f0;border-right:1px solid #7c7c78;border-bottom:1px solid #7c7c78"></div>
<svg style="position:absolute;left:75px;top:436.5px" width="6" height="6" viewBox="0 0 6 6"><path d="M0.5 0.5 L5.5 5.5 M5.5 0.5 L0.5 5.5" stroke="#222" stroke-width="1.1"/></svg>
<span class="t" style="left:84px;top:435.5px;font-size:7px;font-weight:bold;color:#111;letter-spacing:0px;">Редактор тарифных планов</span>
<div style="left:190px;top:434px;width:96px;height:11px;background:#a4a6a2;border-left:1px solid #f6f6f0;border-right:1px solid #7c7c78;border-bottom:1px solid #7c7c78"></div>
<svg style="position:absolute;left:194px;top:436.5px" width="6" height="6" viewBox="0 0 6 6"><path d="M0.5 0.5 L5.5 5.5 M5.5 0.5 L0.5 5.5" stroke="#222" stroke-width="1.1"/></svg>
<span class="t" style="left:203px;top:435.5px;font-size:7px;font-weight:bold;color:#111;letter-spacing:0px;">Пользователи и права</span>
<div style="left:289px;top:434px;width:80px;height:11px;background:#a4a6a2;border-left:1px solid #f6f6f0;border-right:1px solid #7c7c78;border-bottom:1px solid #7c7c78"></div>
<svg style="position:absolute;left:293px;top:436.5px" width="6" height="6" viewBox="0 0 6 6"><path d="M0.5 0.5 L5.5 5.5 M5.5 0.5 L0.5 5.5" stroke="#222" stroke-width="1.1"/></svg>
<span class="t" style="left:302px;top:435.5px;font-size:7px;font-weight:bold;color:#111;letter-spacing:0px;">Поиск договоров</span>
<div style="left:372px;top:434px;width:40px;height:11px;background:#a4a6a2;border-left:1px solid #f6f6f0;border-right:1px solid #7c7c78;border-bottom:1px solid #7c7c78"></div>
<svg style="position:absolute;left:376px;top:436.5px" width="6" height="6" viewBox="0 0 6 6"><path d="M0.5 0.5 L5.5 5.5 M5.5 0.5 L0.5 5.5" stroke="#222" stroke-width="1.1"/></svg>
<span class="t" style="left:385px;top:435.5px;font-size:7px;font-weight:bold;color:#111;letter-spacing:0px;font-family:"Liberation Mono",monospace">x0000</span>
<div style="left:414px;top:433px;width:34px;height:12px;background:#caccc8;border-left:1px solid #f6f6f0;border-right:1px solid #7c7c78;border-bottom:1px solid #7c7c78"></div>
<div style="left:417px;top:436px;width:8px;height:8px;background:#e4e4de;border:1px solid #f6f6f0;border-right-color:#8c8c88;border-bottom-color:#8c8c88"></div>
<svg style="position:absolute;left:418px;top:436.5px" width="6" height="6" viewBox="0 0 6 6"><path d="M0.5 0.5 L5.5 5.5 M5.5 0.5 L0.5 5.5" stroke="#222" stroke-width="1.1"/></svg>
<span class="t" style="left:427px;top:435.5px;font-size:7px;font-weight:bold;color:#111;letter-spacing:0px;font-family:"Liberation Mono",monospace">x00</span>
</body></html>
